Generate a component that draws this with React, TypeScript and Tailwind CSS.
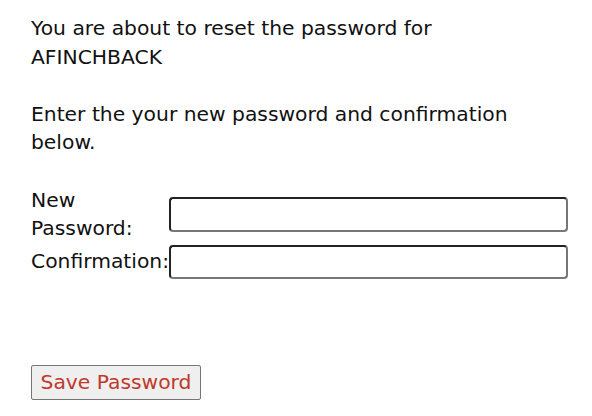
export default function App() {
  return (
    <div className="bg-white w-[592px] h-[416px] text-[#111] text-[20.3px] leading-[28.5px] pt-[14px] pl-[31px]" style={{ fontFamily: '"DejaVu Sans", Verdana, sans-serif' }}>
      <p>You are about to reset the password for<br />AFINCHBACK</p>
      <p className="mt-[28.5px]">Enter the your new password and confirmation<br />below.</p>
      <div className="mt-[29px] grid grid-cols-[138px_398px] gap-y-[2px] items-center">
        <div>New<br />Password:</div>
        <input type="password" className="h-[35px] w-[399px] rounded-[4px] border-2 border-t-[#222] border-l-[#222] border-r-[#777] border-b-[#777] bg-white" />
        <div>Confirmation:</div>
        <input type="password" className="h-[34px] w-[399px] rounded-[4px] border-2 border-t-[#222] border-l-[#222] border-r-[#777] border-b-[#777] bg-white" />
      </div>
      <button className="mt-[86px] h-[35px] w-[170px] border border-[#767676] bg-[#efefef] text-[#c0392b] rounded-[2px]">Save Password</button>
    </div>
  );
}
